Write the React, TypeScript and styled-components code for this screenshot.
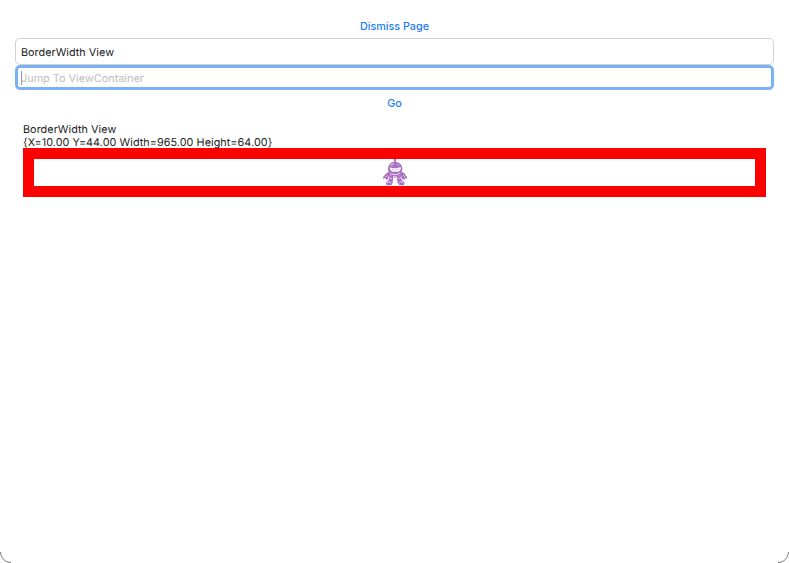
import React from "react";
import styled, { createGlobalStyle } from "styled-components";

const Global = createGlobalStyle`
  * { box-sizing: border-box; }
  html, body { margin: 0; background: #fff; }
`;

const Window = styled.main`
  position: relative;
  height: 563px;
  overflow: hidden;
  padding: 15px 15px 0;
  display: flex;
  flex-direction: column;
  font: 10.8px/13px Inter, "Liberation Sans", sans-serif;
  text-rendering: geometricPrecision;
  color: #222;
`;

const LinkButton = styled.button<{ $height: number }>`
  height: ${(p) => p.$height}px;
  padding: 0;
  border: 0;
  background: none;
  font: inherit;
  font-weight: 500;
  letter-spacing: -0.02px;
  color: #1c7cf5;
`;

const Field = styled.div<{ $focused?: boolean }>`
  display: flex;
  align-items: center;
  height: ${(p) => (p.$focused ? 25 : 27)}px;
  padding-top: 1px;
  padding-left: ${(p) => (p.$focused ? 3 : 5)}px;
  border: ${(p) => (p.$focused ? "3px solid #7ab2f8" : "1px solid #d0d0d0")};
  border-radius: 5px;
  letter-spacing: 0.04px;
  color: ${(p) => (p.$focused ? "#bdbdc0" : "#222")};
`;

const Caret = styled.span`
  width: 1px;
  height: 14px;
  margin-right: -1px;
  background: #8190df;
`;

const Details = styled.section`
  padding: 7px 8px 0;
`;

const Line = styled.div`
  letter-spacing: 0.06px;
  white-space: nowrap;
`;

const BorderedView = styled.div`
  display: flex;
  justify-content: center;
  align-items: center;
  height: 49px;
  margin-top: -1px;
  border: 11px solid #f00;
`;

const Corner = styled.svg<{ $right?: boolean }>`
  position: absolute;
  bottom: 0;
  ${(p) => (p.$right ? "right: 0; transform: scaleX(-1);" : "left: 0;")}
`;

const Robot = () => (
  <svg width="26" height="27" viewBox="34 28 78 81" aria-label="Robot">
    <g fill="#a870c0">
      <circle cx="73" cy="31" r="4" />
      <path d="M71 30h4v9h-4z" />
      <path d="M52 61C51 45 60 36 73 36S96 45 95 61L89 75C82 82 65 82 58 75Z" />
      <path d="M54 66L46 72 37 82 38 88 44 84 46 91 52 88 54 79 60 74Z" />
      <path d="M93 66L101 71 109 82 109 88 103 84 101 91 95 88 92 79 86 74Z" />
      <path d="M56 75L68 80 66 100 62 107H48L46 99 54 92Z" />
      <path d="M78 80L91 75 93 92 102 99 100 107H87L81 100Z" />
    </g>
    <path d="M57 47C61 40 67 39 71 40L68 46 60 50ZM77 40Q84 41 88 47L80 46Z" fill="#c8a6d6" />
    <path d="M57 53Q73 59 90 52Q92 62 84 66H65Q57 63 57 53Z" fill="#f8f2fa" />
    <path d="M65 60h4M78 60h4" stroke="#c29fd1" strokeWidth="2" />
    <path d="M58 72Q74 79 89 71M49 78L45 82M98 77L103 81M57 85L64 87M83 87L91 84M50 99L57 96 61 101M84 101L90 96 97 99" fill="none" stroke="#ead9f0" strokeWidth="3" />
    <path d="M68 81H78L76 86H70Z" fill="#d7bfe1" />
  </svg>
);

const CornerLine = () => <path d="M.5 9C1 15 5 19.5 11 19.5" fill="none" stroke="#777" />;

export default function App() {
  return (
    <>
      <Global />
      <Window>
        <LinkButton $height={23}>Dismiss Page</LinkButton>
        <Field>BorderWidth View</Field>
        <Field $focused>
          <Caret />
          Jump To ViewContainer
        </Field>
        <LinkButton $height={26}>Go</LinkButton>
        <Details>
          <Line>BorderWidth View</Line>
          <Line>{"{X=10.00 Y=44.00 Width=965.00 Height=64.00}"}</Line>
          <BorderedView>
            <Robot />
          </BorderedView>
        </Details>
        <Corner width="20" height="20"><CornerLine /></Corner>
        <Corner $right width="20" height="20"><CornerLine /></Corner>
      </Window>
    </>
  );
}
